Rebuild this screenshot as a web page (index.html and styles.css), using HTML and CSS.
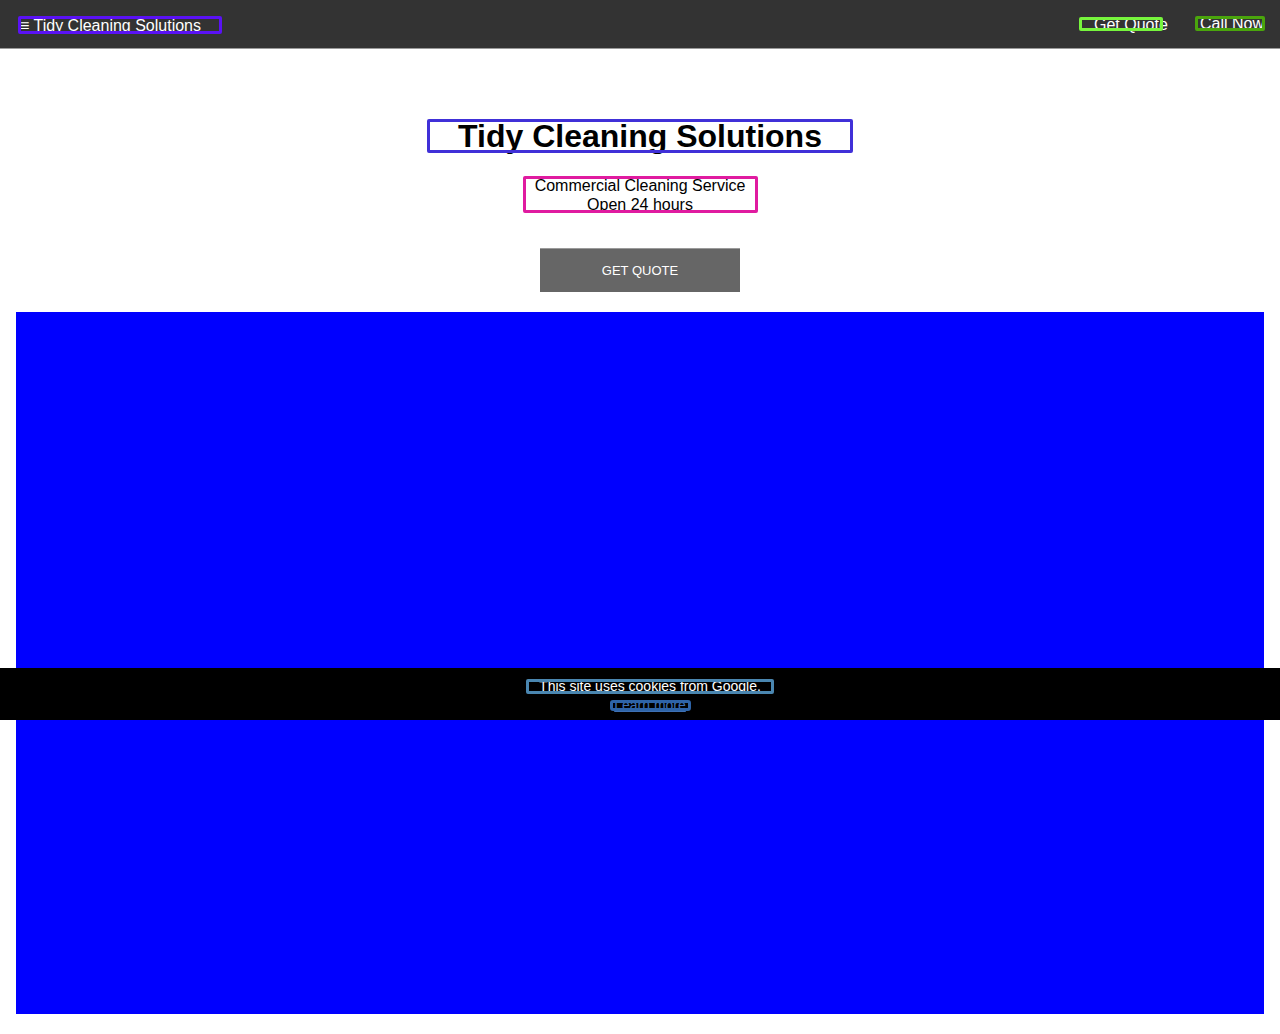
FILE: index.html
```html
<!DOCTYPE html>
<html lang="en">
<head>
<meta charset="utf-8">
<title>Tidy Cleaning Solutions</title>
<link rel="stylesheet" href="styles.css">
</head>
<body>
<header class="topbar">
  <div class="brand"><span class="burger">&#8801;</span> Tidy Cleaning Solutions</div>
  <nav class="nav">
    <a class="nav-quote" href="#">Get Quote</a>
    <a class="nav-call" href="#">Call Now</a>
  </nav>
</header>
<main class="hero">
  <h1 class="title">Tidy Cleaning Solutions</h1>
  <div class="subtitle">Commercial Cleaning Service<br>Open 24 hours</div>
  <a class="cta" href="#">GET QUOTE</a>
</main>
<section class="media"></section>
<div class="cookie">
  <div class="cookie-text">This site uses cookies from Google.</div>
  <a class="cookie-link" href="#">Learn more</a>
</div>
</body>
</html>
```
FILE: styles.css
```css
html, body {
  margin: 0;
  padding: 0;
  background: #fff;
  font-family: "Liberation Sans", Arial, sans-serif;
}
.topbar {
  height: 48px;
  background: #333333;
  border-bottom: 1px solid #9a9a9a;
  display: flex;
  justify-content: space-between;
  align-items: flex-start;
  padding: 0 15px 0 18px;
}
.brand {
  margin-top: 16px;
  width: 204px;
  height: 18px;
  line-height: 20px;
  color: #fff;
  font-size: 16px;
  white-space: nowrap;
  padding-left: 2px;
  box-sizing: border-box;
  outline: 3px solid #5a12f5;
  outline-offset: -3px;
  border-radius: 2px;
}
.burger {
  font-size: 16px;
}
.nav {
  display: flex;
  align-items: flex-start;
  gap: 32px;
}
.nav a {
  color: #fff;
  text-decoration: none;
  font-size: 16px;
  line-height: 15px;
  white-space: nowrap;
  box-sizing: border-box;
  border-radius: 2px;
  outline-offset: -3px;
}
.nav-quote {
  margin-top: 17px;
  width: 84px;
  height: 14px;
  padding-left: 15px;
  outline: 3px solid #77f53d;
}
.nav-call {
  margin-top: 16px;
  width: 70px;
  height: 15px;
  padding-left: 5px;
  outline: 3px solid #4aa50c;
}
.hero {
  display: flex;
  flex-direction: column;
  align-items: center;
  padding-top: 70px;
}
.title {
  margin: 0;
  width: 426px;
  height: 34px;
  box-sizing: border-box;
  text-align: center;
  font-size: 32px;
  font-weight: bold;
  line-height: 34px;
  color: #000;
  outline: 3px solid #4030d8;
  outline-offset: -3px;
  border-radius: 2px;
}
.subtitle {
  margin-top: 23px;
  width: 235px;
  height: 37px;
  text-align: center;
  font-size: 16px;
  line-height: 19px;
  color: #000;
  outline: 3px solid #e01ba0;
  outline-offset: -3px;
  border-radius: 2px;
}
.cta {
  margin-top: 35px;
  width: 200px;
  height: 44px;
  box-sizing: border-box;
  background: #666666;
  border-top: 1px solid #9a9a9a;
  color: #fff;
  font-size: 13px;
  text-decoration: none;
  display: flex;
  align-items: center;
  justify-content: center;
}
.media {
  margin: 20px 16px 20px;
  height: 702px;
  background: #0000ff;
}
.cookie {
  position: fixed;
  left: 0;
  right: 0;
  top: 668px;
  height: 52px;
  background: #000;
  display: flex;
  flex-direction: column;
  align-items: center;
  padding-left: 20px;
  box-sizing: border-box;
}
.cookie-text {
  margin-top: 11px;
  width: 248px;
  height: 15px;
  box-sizing: border-box;
  text-align: center;
  color: #fff;
  font-size: 14px;
  line-height: 14px;
  white-space: nowrap;
  outline: 3px solid #4a86b0;
  outline-offset: -3px;
  border-radius: 2px;
}
.cookie-link {
  margin-top: 6px;
  width: 81px;
  height: 11px;
  text-align: center;
  color: #3d70b5;
  font-size: 14px;
  line-height: 10px;
  white-space: nowrap;
  text-decoration: underline;
  outline: 3px solid #2e64a8;
  outline-offset: -3px;
  border-radius: 3px;
}
```
